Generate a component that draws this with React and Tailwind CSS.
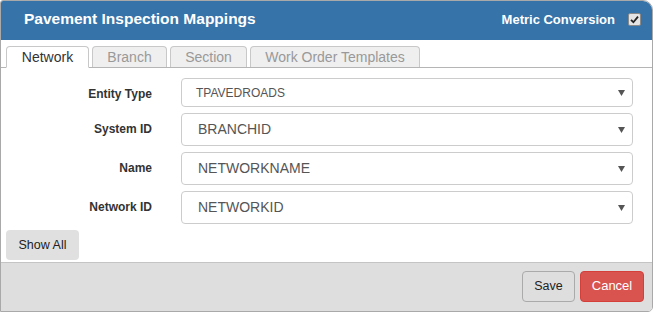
export default function App() {
  const rows = [
    { label: "Entity Type", value: "TPAVEDROADS", small: true },
    { label: "System ID", value: "BRANCHID" },
    { label: "Name", value: "NETWORKNAME" },
    { label: "Network ID", value: "NETWORKID" },
  ];
  return (
    <div className="w-[653px] h-[312px] bg-white" style={{ fontFamily: '"Liberation Sans", Arial, sans-serif' }}>
      <div className="w-[653px] h-[312px] border border-[#a9a9a9] rounded-tl-[3px] rounded-tr-[10px] rounded-br-[5px] overflow-hidden flex flex-col">
        <div className="h-[39px] bg-[#3673a9] flex items-center justify-between pl-[23px] pr-[11px] shrink-0">
          <div className="text-white font-bold text-[15.5px] leading-none -mt-[3px]">Pavement Inspection Mappings</div>
          <div className="flex items-center -mt-[3px]">
            <span className="text-white font-bold text-[13px] leading-none">Metric Conversion</span>
            <div className="ml-[13px] w-[13px] h-[13px] bg-[#e4e4e4] border border-[#8a8a8a] rounded-[2px] flex items-center justify-center">
              <svg width="9" height="9" viewBox="0 0 9 9">
                <path d="M1 4.8 L3.4 7.2 L8 1.6" stroke="#222" strokeWidth="1.8" fill="none" />
              </svg>
            </div>
          </div>
        </div>
        <div className="flex items-end gap-[3px] pl-[5px] pt-[6px] border-b border-[#b5b5b5] shrink-0 h-[28px]">
          <div className="w-[83px] h-[22px] -mb-px bg-white border border-[#c8c8c8] border-b-white rounded-t-[4px] flex items-center justify-center text-[14px] text-[#333]">Network</div>
          <div className="w-[75px] h-[21px] bg-[#efefef] border border-[#c8c8c8] border-b-0 rounded-t-[4px] flex items-center justify-center text-[14px] text-[#999]">Branch</div>
          <div className="w-[77px] h-[21px] bg-[#efefef] border border-[#c8c8c8] border-b-0 rounded-t-[4px] flex items-center justify-center text-[14px] text-[#999]">Section</div>
          <div className="w-[170px] h-[21px] bg-[#efefef] border border-[#c8c8c8] border-b-0 rounded-t-[4px] flex items-center justify-center text-[14px] text-[#999]">Work Order Templates</div>
        </div>
        <div className="flex-1 flex flex-col pt-[10px]">
          <div className="flex flex-col gap-[6px]">
            {rows.map((r, i) => (
              <div key={i} className="flex items-start">
                <div className={"w-[151px] text-right font-bold text-[12px] text-[#333] " + (r.small ? "pt-[7px]" : "pt-[7px]")}>{r.label}</div>
                <div className={"ml-[29px] w-[452px] border border-[#ccc] rounded-[4px] flex items-center justify-between pr-[7px] " + (r.small ? "h-[29px] pl-[14px]" : "h-[33px] pl-[16px]")}>
                  <span className={r.small ? "text-[12px] text-[#555]" : "text-[14px] text-[#555]"}>{r.value}</span>
                  <svg width="7" height="6" viewBox="0 0 7 6">
                    <path d="M0 0 H7 L3.5 6 Z" fill="#555" />
                  </svg>
                </div>
              </div>
            ))}
          </div>
          <div className="pl-[5px] mt-[6px]">
            <div className="w-[73px] h-[30px] bg-[#e0e0e0] rounded-[4px] flex items-center justify-center text-[12.5px] text-[#222]">Show All</div>
          </div>
        </div>
        <div className="h-[49px] shrink-0 bg-[#dedede] border-t border-[#c4c4c4] flex items-center justify-end gap-[5px] pr-[8px] pb-[2px]">
          <div className="w-[53px] h-[31px] border border-[#aaa] rounded-[4px] bg-[#dedede] flex items-center justify-center text-[12.5px] text-[#222]">Save</div>
          <div className="w-[64px] h-[31px] border border-[#d43f3a] rounded-[4px] bg-[#d9534f] flex items-center justify-center text-[13px] text-white">Cancel</div>
        </div>
      </div>
    </div>
  );
}
